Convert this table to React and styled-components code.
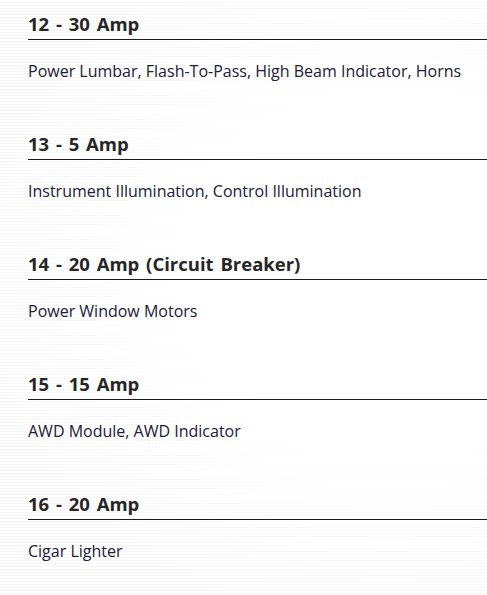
import React from "react";
import styled, { createGlobalStyle } from "styled-components";

const Global = createGlobalStyle`
  html, body { margin: 0; padding: 0; }
  body {
    background-color: #ffffff;
    background-image:
      radial-gradient(ellipse at 80% 45%, rgba(255,255,255,1) 0%, rgba(255,255,255,1) 35%, rgba(255,255,255,0) 75%),
      repeating-linear-gradient(0deg, rgba(0,0,0,0.035) 0px, rgba(0,0,0,0.035) 1px, transparent 1px, transparent 3px);
    min-height: 595px;
    overflow: hidden;
  }
`;

const Page = styled.div`
  padding: 12px 0 0 28px;
  font-family: "Open Sans", "Noto Sans", sans-serif;
  color: #1e1e2a;
`;

const Section = styled.section`
  height: 120px;
`;

const Heading = styled.h2`
  margin: 0;
  font-size: 18.5px;
  line-height: 24px;
  font-weight: 700;
  word-spacing: 2px;
  color: #262626;
  padding-bottom: 3px;
  border-bottom: 1px solid #1a1a1a;
`;

const Body = styled.p`
  margin: 20px 0 0;
  font-size: 16px;
  line-height: 22px;
  color: #20203a;
`;

const fuses = [
  ["12 - 30 Amp", "Power Lumbar, Flash-To-Pass, High Beam Indicator, Horns"],
  ["13 - 5 Amp", "Instrument Illumination, Control Illumination"],
  ["14 - 20 Amp (Circuit Breaker)", "Power Window Motors"],
  ["15 - 15 Amp", "AWD Module, AWD Indicator"],
  ["16 - 20 Amp", "Cigar Lighter"],
];

export default function App() {
  return (
    <>
      <Global />
      <Page>
        {fuses.map(([h, b]) => (
          <Section key={h}>
            <Heading>{h}</Heading>
            <Body>{b}</Body>
          </Section>
        ))}
      </Page>
    </>
  );
}
